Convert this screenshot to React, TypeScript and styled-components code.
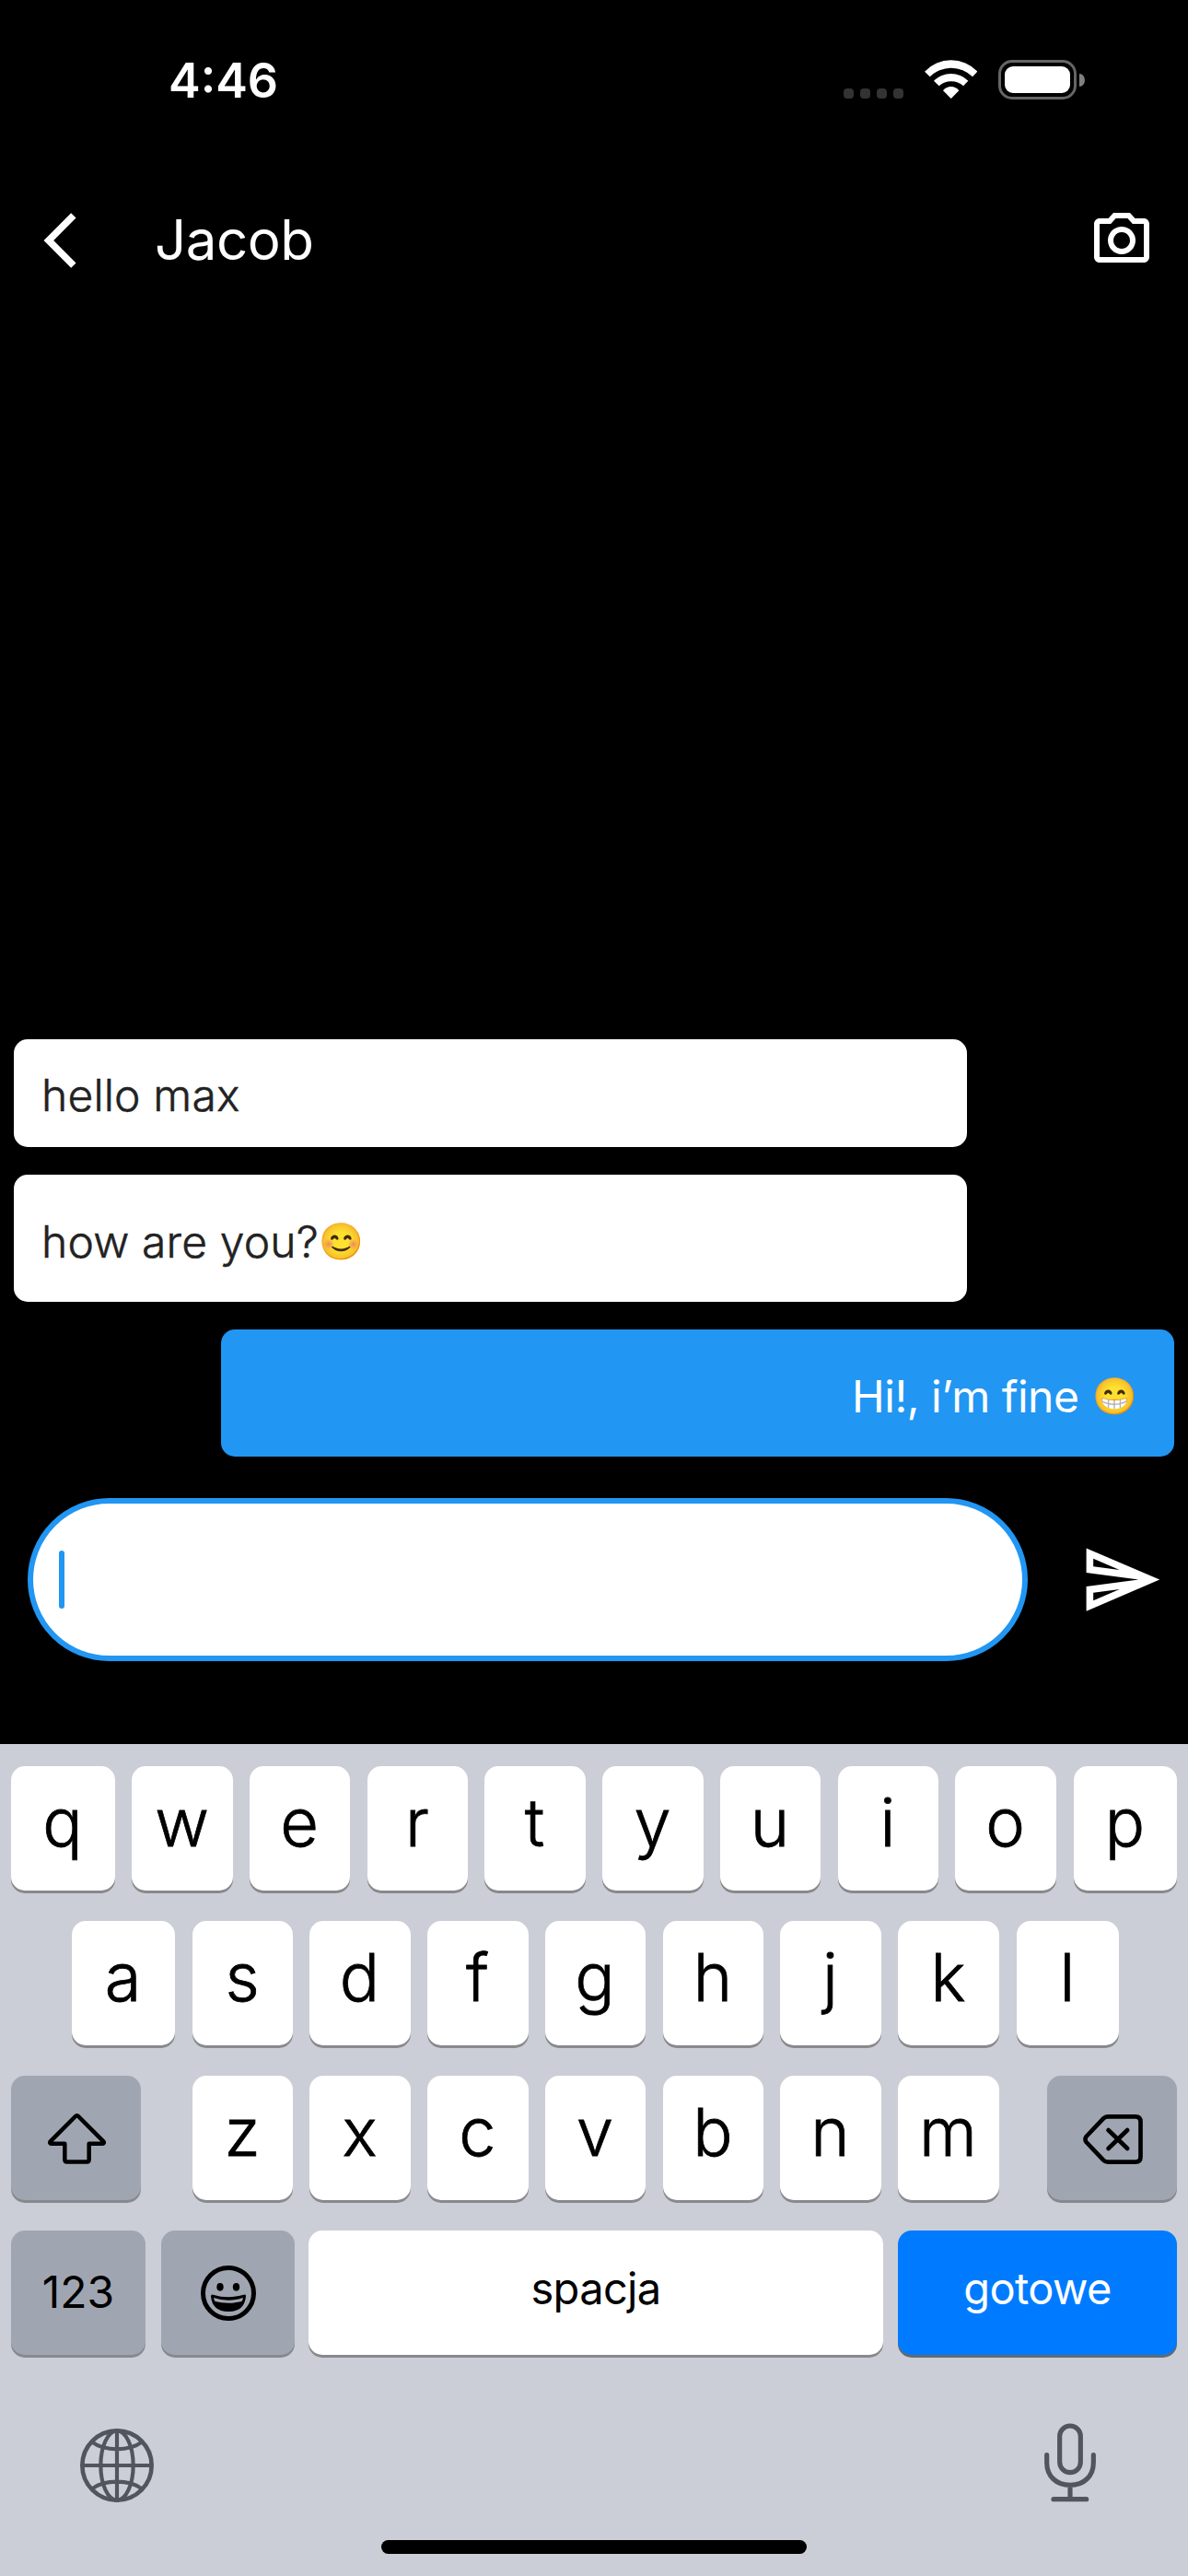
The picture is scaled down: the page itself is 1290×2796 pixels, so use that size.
import React from "react";
import styled, { createGlobalStyle, css } from "styled-components";

const GlobalStyle = createGlobalStyle`
  * { box-sizing: border-box; }
  html, body { margin: 0; padding: 0; background: #000; }
`;

const Screen = styled.div`
  width: 1290px;
  height: 2796px;
  display: flex;
  flex-direction: column;
  overflow: hidden;
  background: #000;
  color: #fff;
  font-family: Inter, "Liberation Sans", sans-serif;
`;

/* ---------- status bar ---------- */

const StatusBar = styled.header`
  height: 177px;
  flex: none;
  display: flex;
  align-items: flex-start;
  justify-content: space-between;
  padding: 65px 112px 0 183px;
`;

const Clock = styled.time`
  font-size: 52px;
  font-weight: 600;
  line-height: 46px;
`;

const StatusIcons = styled.div`
  display: flex;
  align-items: flex-start;
`;

const CellularDots = styled.div`
  display: flex;
  gap: 7px;
  margin: 31px 23px 0 0;
`;

const CellularDot = styled.span`
  width: 11px;
  height: 11px;
  border-radius: 4px;
  background: #333;
`;

const Battery = styled.div`
  display: flex;
  align-items: center;
  gap: 3px;
  margin-left: 23px;
`;

const BatteryBody = styled.div`
  width: 85px;
  height: 43px;
  padding: 4px;
  border: 3px solid #666;
  border-radius: 15px;
`;

const BatteryLevel = styled.div`
  height: 100%;
  border-radius: 9px;
  background: #fff;
`;

const BatteryTip = styled.div`
  width: 6px;
  height: 14px;
  border-radius: 0 6px 6px 0 / 0 7px 7px 0;
  background: #808080;
`;

/* ---------- app bar ---------- */

const AppBar = styled.nav`
  height: 168px;
  flex: none;
  display: flex;
  align-items: center;
  padding: 0 36px 0 30px;
`;

const IconButton = styled.button`
  display: flex;
  flex: none;
  padding: 0;
  border: 0;
  background: none;
  color: inherit;
`;

const Title = styled.h1`
  flex: 1;
  margin: 0 0 2px 66px;
  font-size: 60px;
  font-weight: 400;
  line-height: 72px;
  letter-spacing: -0.5px;
`;

/* ---------- conversation ---------- */

const Conversation = styled.main`
  flex: 1;
  display: flex;
  flex-direction: column;
  justify-content: flex-end;
  gap: 30px;
  padding: 0 15px;
`;

const Bubble = styled.div<{ $mine?: boolean; $tall?: boolean }>`
  width: 1035px;
  height: ${({ $tall }) => ($tall ? 138 : 117)}px;
  padding: ${({ $tall }) => ($tall ? 45 : 33)}px 30px 0;
  display: flex;
  align-items: flex-start;
  border-radius: 15px;
  background: #fff;
  color: #222;
  font-size: 48px;
  font-weight: 300;
  line-height: 56px;
  letter-spacing: 0.15px;
  white-space: pre;
  -webkit-text-stroke: 0.5px currentColor;

  ${({ $mine }) =>
    $mine &&
    css`
      align-self: flex-end;
      justify-content: flex-end;
      padding-right: 40px;
      background: #2196f3;
      color: #fff;
      font-weight: 400;
      letter-spacing: -0.5px;
      -webkit-text-stroke: 0;
    `}
`;

const Emoji = styled.span<{ $gap: number }>`
  height: 44px;
  margin: 6px 0 0 ${({ $gap }) => $gap}px;
  font-family: "Noto Color Emoji", "Apple Color Emoji", sans-serif;
  font-size: 39px;
  font-weight: 400;
  line-height: 44px;
  letter-spacing: 0;
  -webkit-text-stroke: 0;
`;

const Composer = styled.form`
  height: 312px;
  flex: none;
  display: flex;
  align-items: flex-start;
  padding: 45px 0 0 30px;
`;

const MessageField = styled.div`
  width: 1086px;
  height: 177px;
  flex: none;
  display: flex;
  align-items: center;
  padding-left: 28px;
  border: 6px solid #2196f3;
  border-radius: 89px;
  background: #fff;
`;

const Caret = styled.span`
  width: 6px;
  height: 63px;
  border-radius: 3px;
  background: #2196f3;
`;

const SendButton = styled(IconButton)`
  margin: 43px 0 0 56px;
`;

/* ---------- keyboard ---------- */

const Keyboard = styled.section`
  height: 903px;
  flex: none;
  display: flex;
  flex-direction: column;
  padding-top: 24px;
  background: #cbced6;
  color: #000;
`;

const KeyRows = styled.div`
  display: flex;
  flex-direction: column;
  gap: 33px;
`;

const KeyRow = styled.div`
  display: flex;
`;

type Tone = "light" | "dark" | "primary";

const tones: Record<Tone, string> = {
  light: "background: #fff;",
  dark: "background: #a0a6b1;",
  primary: "background: #007bff; color: #fff; box-shadow: 0 3px 0 #636972;",
};

const KeyCap = styled.div<{ $width: number; $before: number; $tone: Tone }>`
  width: ${({ $width }) => $width}px;
  height: 135px;
  margin-left: ${({ $before }) => $before}px;
  display: flex;
  align-items: center;
  justify-content: center;
  border-radius: 15px;
  box-shadow: 0 3px 0 #88898d;
  ${({ $tone }) => tones[$tone]}
`;

const Letter = styled.span`
  align-self: flex-start;
  padding: 18px 1px 0 0;
  font-size: 72px;
  font-weight: 300;
  line-height: 86px;
  -webkit-text-stroke: 0.8px currentColor;
`;

const Word = styled.span<{ $numeric?: boolean }>`
  align-self: flex-start;
  padding-top: ${({ $numeric }) => ($numeric ? 38 : 34)}px;
  font-size: ${({ $numeric }) => ($numeric ? 48 : 47)}px;
  letter-spacing: ${({ $numeric }) => ($numeric ? 0 : -0.65)}px;
  line-height: 58px;
`;

const KeyboardFooter = styled.div`
  display: flex;
  align-items: flex-start;
  justify-content: space-between;
  padding: 74px 100px 0 85px;
  color: #50555e;
`;

const HomeIndicator = styled.div`
  width: 462px;
  height: 15px;
  margin: auto auto 24px;
  border-radius: 8px;
  background: #000;
`;

/* ---------- icons ---------- */

const WifiIcon = () => (
  <svg width="57.4" height="42" viewBox="0 0 172 126" fill="#fff">
    <path d="M0 38A118 118 0 0 1 172 38L156 55A98 98 0 0 0 17 55Z" />
    <path d="M30 68A80 80 0 0 1 142 68L126 85A59.5 59.5 0 0 0 47 85Z" />
    <path d="M60 100A32.5 32.5 0 0 1 112 100L86 126Z" />
  </svg>
);

const BackIcon = () => (
  <svg width="72" height="72" viewBox="0 0 24 24" fill="currentColor">
    <path d="M17.51 3.87 15.73 2.1 5.84 12l9.9 9.9 1.77-1.77L9.38 12z" />
  </svg>
);

const CameraIcon = () => (
  <svg width="72" height="72" viewBox="0 0 24 24" fill="currentColor">
    <path d="M20 4h-3.17L15 2H9L7.17 4H4c-1.1 0-2 .9-2 2v12c0 1.1.9 2 2 2h16c1.1 0 2-.9 2-2V6c0-1.1-.9-2-2-2zm0 14H4V6h4.05l1.83-2h4.24l1.83 2H20v12zM12 7c-2.76 0-5 2.24-5 5s2.24 5 5 5 5-2.24 5-5-2.24-5-5-5zm0 8c-1.65 0-3-1.35-3-3s1.35-3 3-3 3 1.35 3 3-1.35 3-3 3z" />
  </svg>
);

const SendIcon = () => (
  <svg width="91" height="91" viewBox="0 0 24 24" fill="currentColor">
    <path d="M4.01 6.03l7.51 3.22-7.52-1 .01-2.22m7.5 8.72L4 17.97v-2.22l7.51-1M2.01 3L2 10l15 2-15 2 .01 7L23 12 2.01 3z" />
  </svg>
);

const ShiftGlyph = styled.svg`
  margin: 2px 0 0 2px;
`;

const ShiftIcon = () => (
  <ShiftGlyph width="63" height="55" viewBox="0 0 189 165" fill="none" stroke="#000" strokeWidth="13.5" strokeLinejoin="round">
    <path d="M90 9Q94.500 5 99 9L181 91Q185 97 178 98.500H134V150Q134 157.500 127 157.500H62Q55 157.500 55 150V98.500H11Q4 97 8 91Z" />
  </ShiftGlyph>
);

const BackspaceGlyph = styled.svg`
  margin: 3px 0 0 2px;
`;

const BackspaceIcon = () => (
  <BackspaceGlyph width="65" height="54" viewBox="0 0 194 162" fill="none" stroke="#000" strokeWidth="14" strokeLinecap="round" strokeLinejoin="round">
    <path d="M80 7H170Q187 7 187 24V138Q187 155 170 155H80Q72 155 66 149L10 90Q4 81 10 72L66 13Q72 7 80 7Z" />
    <path d="M82 51 144 111M144 51 82 111" />
  </BackspaceGlyph>
);

const SmileyIcon = () => (
  <svg width="60" height="60" viewBox="0 0 180 180">
    <circle cx="90" cy="90" r="82.500" fill="none" stroke="#000" strokeWidth="15" />
    <ellipse cx="63" cy="70" rx="11" ry="13" />
    <ellipse cx="115.500" cy="70" rx="11" ry="13" />
    <path d="M33 100Q33 94 40 95Q90 110 140 95Q148 94 147 100Q143 150 90 150Q37 150 33 100Z" />
    <path d="M42 105Q90 121 138 105Q137 113 133 117Q90 127 47 117Q43 113 42 105Z" fill="#a0a6b1" />
  </svg>
);

const GlobeGlyph = styled.svg`
  margin-top: 4px;
`;

const GlobeIcon = () => (
  <GlobeGlyph width="84" height="84" viewBox="-126 -126 252 252" fill="none" stroke="currentColor" strokeWidth="12.500">
    <circle r="113" strokeWidth="14" />
    <ellipse rx="53" ry="113" />
    <path d="M0-113V113M-113 0H113M-81-76Q-50-53 0-53T81-76M-81 76Q-50 53 0 53T81 76" />
  </GlobeGlyph>
);

const MicIcon = () => (
  <svg width="56" height="86" viewBox="0 0 168 258" fill="none" stroke="currentColor" strokeWidth="15.500" strokeLinecap="round">
    <rect x="50" y="9" width="68" height="152" rx="34" />
    <path d="M8 104V128C8 174 40 202 84 202S160 174 160 128V104M84 202V248M30 248H137" />
  </svg>
);

/* ---------- keyboard data: [label, width, space before] ---------- */

type KeySpec = [string, number, number];

const topRow: KeySpec[] = [
  ["q", 113, 12], ["w", 110, 18], ["e", 109, 18], ["r", 109, 19], ["t", 110, 18],
  ["y", 110, 18], ["u", 109, 18], ["i", 109, 19], ["o", 110, 18], ["p", 112, 19],
];
const homeRow: KeySpec[] = [
  ["a", 112, 78], ["s", 109, 19], ["d", 110, 18], ["f", 110, 18], ["g", 109, 18],
  ["h", 109, 19], ["j", 110, 18], ["k", 110, 18], ["l", 111, 19],
];
const bottomRow: KeySpec[] = [
  ["z", 109, 56], ["x", 110, 18], ["c", 110, 18], ["v", 109, 18],
  ["b", 109, 19], ["n", 110, 18], ["m", 110, 18],
];

interface KeyProps {
  width: number;
  before: number;
  tone?: Tone;
  children: React.ReactNode;
}

const Key = ({ width, before, tone = "light", children }: KeyProps) => (
  <KeyCap $width={width} $before={before} $tone={tone}>
    {children}
  </KeyCap>
);

const LetterKeys = ({ keys }: { keys: KeySpec[] }) => (
  <>
    {keys.map(([label, width, before]) => (
      <Key key={label} width={width} before={before}>
        <Letter>{label}</Letter>
      </Key>
    ))}
  </>
);

export default function App() {
  return (
    <Screen>
      <GlobalStyle />
      <StatusBar>
        <Clock>4:46</Clock>
        <StatusIcons>
          <CellularDots>
            <CellularDot />
            <CellularDot />
            <CellularDot />
            <CellularDot />
          </CellularDots>
          <WifiIcon />
          <Battery>
            <BatteryBody>
              <BatteryLevel />
            </BatteryBody>
            <BatteryTip />
          </Battery>
        </StatusIcons>
      </StatusBar>

      <AppBar>
        <IconButton aria-label="Back">
          <BackIcon />
        </IconButton>
        <Title>Jacob</Title>
        <IconButton aria-label="Camera">
          <CameraIcon />
        </IconButton>
      </AppBar>

      <Conversation>
        <Bubble>hello max</Bubble>
        <Bubble $tall>
          how are you?<Emoji $gap={0}>😊</Emoji>
        </Bubble>
        <Bubble $mine $tall>
          <span>{"Hi!, i’m fine "}</span>
          <Emoji $gap={2}>😁</Emoji>
        </Bubble>
      </Conversation>

      <Composer>
        <MessageField>
          <Caret />
        </MessageField>
        <SendButton type="button" aria-label="Send">
          <SendIcon />
        </SendButton>
      </Composer>

      <Keyboard>
        <KeyRows>
          <KeyRow>
            <LetterKeys keys={topRow} />
          </KeyRow>
          <KeyRow>
            <LetterKeys keys={homeRow} />
          </KeyRow>
          <KeyRow>
            <Key width={141} before={12} tone="dark">
              <ShiftIcon />
            </Key>
            <LetterKeys keys={bottomRow} />
            <Key width={141} before={52} tone="dark">
              <BackspaceIcon />
            </Key>
          </KeyRow>
          <KeyRow>
            <Key width={146} before={12} tone="dark">
              <Word $numeric>123</Word>
            </Key>
            <Key width={145} before={17} tone="dark">
              <SmileyIcon />
            </Key>
            <Key width={624} before={15}>
              <Word>spacja</Word>
            </Key>
            <Key width={303} before={16} tone="primary">
              <Word>gotowe</Word>
            </Key>
          </KeyRow>
        </KeyRows>
        <KeyboardFooter>
          <GlobeIcon />
          <MicIcon />
        </KeyboardFooter>
        <HomeIndicator />
      </Keyboard>
    </Screen>
  );
}
